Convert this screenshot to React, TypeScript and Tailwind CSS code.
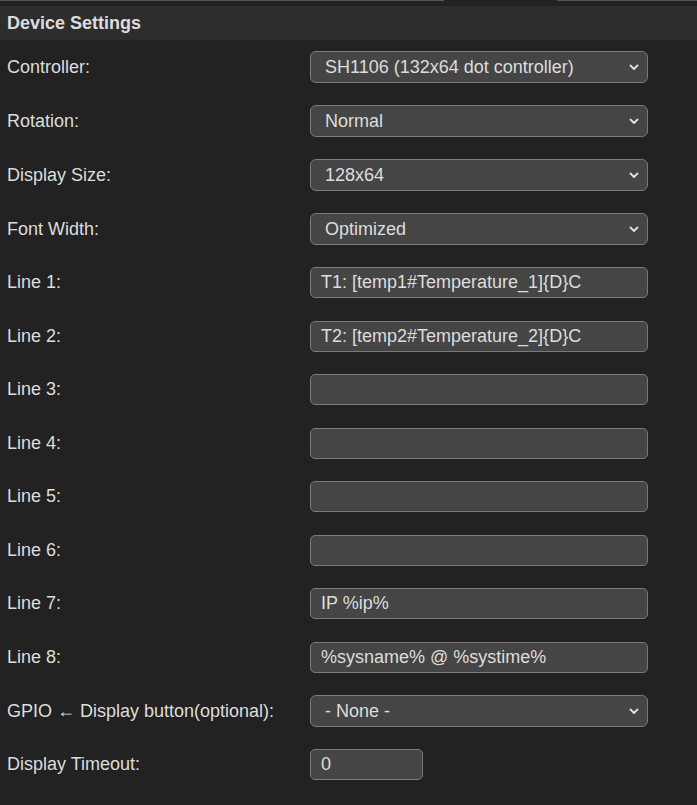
import React from "react";

type Field = { label: string; kind: "select" | "input"; value: string; short?: boolean };

const fields: Field[] = [
    { label: "Controller:", kind: "select", value: "SH1106 (132x64 dot controller)" },
    { label: "Rotation:", kind: "select", value: "Normal" },
    { label: "Display Size:", kind: "select", value: "128x64" },
    { label: "Font Width:", kind: "select", value: "Optimized" },
    { label: "Line 1:", kind: "input", value: "T1: [temp1#Temperature_1]{D}C" },
    { label: "Line 2:", kind: "input", value: "T2: [temp2#Temperature_2]{D}C" },
    { label: "Line 3:", kind: "input", value: "" },
    { label: "Line 4:", kind: "input", value: "" },
    { label: "Line 5:", kind: "input", value: "" },
    { label: "Line 6:", kind: "input", value: "" },
    { label: "Line 7:", kind: "input", value: "IP %ip%" },
    { label: "Line 8:", kind: "input", value: "%sysname% @ %systime%" },
    { label: "GPIO \u2190 Display button(optional):", kind: "select", value: "- None -" },
    { label: "Display Timeout:", kind: "input", value: "0", short: true },
];

function Chevron() {
    return (
        <svg width="10" height="7" viewBox="0 0 10 7" className="text-[#e0e0e0]">
            <path d="M1.5 1.5 L5 5 L8.5 1.5" fill="none" stroke="currentColor" strokeWidth="1.8" strokeLinecap="round" strokeLinejoin="round" />
        </svg>
    );
}

function Row({ field }: { field: Field }) {
    const isSelect = field.kind === "select";
    return (
        <div className={`flex items-center ${isSelect ? "h-[54px]" : "h-[53.5px]"}`}>
            <div className="w-[310px] pl-[7px] text-[18px] text-[#dddddd]">{field.label}</div>
            {isSelect ? (
                <div className="w-[338px] h-[32px] rounded-[6px] border border-[#7a7a7a] bg-[#454545] flex items-center justify-between pl-[14px] pr-[8px] text-[18px] text-[#dddddd]">
                    <span>{field.value}</span>
                    <Chevron />
                </div>
            ) : (
                <div
                    className={`${field.short ? "w-[113px]" : "w-[338px]"} h-[31px] rounded-[5px] border border-[#7a7a7a] bg-[#454545] flex items-center pl-[10px] text-[18px] text-[#dddddd]`}
                >
                    {field.value}
                </div>
            )}
        </div>
    );
}

export default function App() {
    return (
        <main className="w-[697px] h-[805px] bg-[#222222] overflow-hidden" style={{ fontFamily: '"Liberation Sans", Arial, sans-serif' }}>
            {/* tab strip edge */}
            <div className="flex h-[1px]">
                <div className="w-[444px] bg-[#555555]" />
                <div className="w-[113px]" />
                <div className="flex-1 bg-[#555555]" />
            </div>
            <div className="h-[5px]" />

            {/* HEADER */}
            <div className="h-[34px] bg-[#2d2d2d] flex items-center pl-[7px]">
                <h2 className="text-[18px] font-bold text-[#dddddd]">Device Settings</h2>
            </div>

            <div>
                {fields.map((f) => (
                    <Row key={f.label} field={f} />
                ))}
            </div>
        </main>
    );
}
